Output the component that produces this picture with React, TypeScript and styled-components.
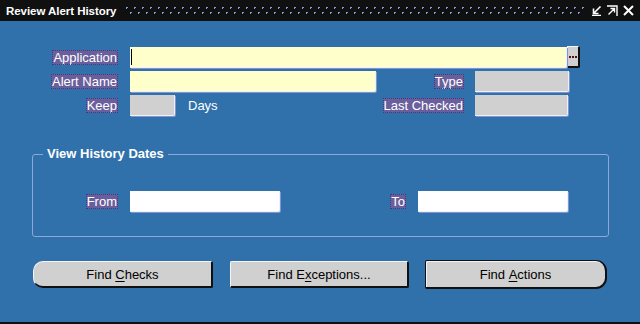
import React from "react";
import styled, { createGlobalStyle } from "styled-components";

const Global = createGlobalStyle`
  html, body { margin: 0; padding: 0; background: #3071ab; }
  body { font-family: "Liberation Sans", Arial, sans-serif; }
`;

const Window = styled.div`
  width: 640px;
  height: 324px;
  display: flex;
  flex-direction: column;
  background: #3071ab;
  box-sizing: border-box;
  overflow: hidden;
`;

const TitleBar = styled.div`
  height: 21px;
  flex: none;
  background: #101010;
  display: flex;
  align-items: center;
  padding: 0 6px 0 6px;
  box-sizing: border-box;
`;

const TitleText = styled.div`
  color: #fff;
  font-weight: bold;
  font-size: 11.5px;
  letter-spacing: -0.05px;
  white-space: nowrap;
`;

const TitleFill = styled.div`
  flex: 1;
  height: 10px;
  margin: 0 5px 0 10px;
  display: flex;
`;

const TitleIcons = styled.div`
  display: flex;
  align-items: center;
  gap: 5px;
`;

const Body = styled.div`
  flex: 1;
  border-bottom: 2px solid #101010;
  padding-top: 26px;
  display: flex;
  flex-direction: column;
`;

const Row = styled.div<{ $mt?: number }>`
  display: flex;
  align-items: center;
  height: 21px;
  margin-top: ${(p) => p.$mt ?? 0}px;
`;

const LabelCell = styled.div<{ $w: number }>`
  width: ${(p) => p.$w}px;
  flex: none;
  display: flex;
  justify-content: flex-end;
`;

const Prompt = styled.span`
  color: #fff;
  font-size: 13px;
  line-height: 15px;
  height: 15px;
  padding: 0 1px;
  background: #6a5f9c;
  outline: 1px dotted #33407e;
  outline-offset: -1px;
  white-space: nowrap;
`;

const PlainText = styled.span<{ $ml?: number }>`
  color: #fff;
  font-size: 13px;
  margin-left: ${(p) => p.$ml ?? 0}px;
`;

const Field = styled.div<{ $w: number; $ml?: number; $bg: string }>`
  position: relative;
  flex: none;
  width: ${(p) => p.$w}px;
  height: 21px;
  margin-left: ${(p) => p.$ml ?? 0}px;
  background: ${(p) => p.$bg};
  box-sizing: border-box;
  border-right: 1px solid #eef0fa;
  border-bottom: 1px solid #eef0fa;
  border-radius: 0 0 2px 0;
  box-shadow: 1px 1px 0 #8095d2;
`;

const Cursor = styled.div`
  position: absolute;
  left: 1px;
  top: 2px;
  width: 1px;
  height: 16px;
  background: #000;
`;

const Group = styled.div<{ $w: number }>`
  flex: none;
  width: ${(p) => p.$w}px;
  display: flex;
  align-items: center;
`;

const LovButton = styled.div`
  flex: none;
  width: 13px;
  height: 22px;
  margin-top: -1px;
  background: #d0d0d0;
  box-sizing: border-box;
  border-top: 1px solid #f4f4f4;
  border-left: 1px solid #f4f4f4;
  border-right: 2px solid #101010;
  border-bottom: 2px solid #101010;
  border-radius: 0 2px 2px 0;
  display: flex;
  align-items: center;
  justify-content: center;
  gap: 1px;
`;

const LovDot = styled.span`
  width: 2px;
  height: 2px;
  background: #5a0d0d;
`;

const Frame = styled.div`
  position: relative;
  margin: 38px 0 0 32px;
  width: 577px;
  box-sizing: border-box;
  border: 1px solid #8ea6dc;
  border-radius: 3px;
  padding: 36px 0 24px 0;
`;

const FrameTitle = styled.div`
  position: absolute;
  top: -9px;
  left: 10px;
  padding: 0 4px;
  background: #3071ab;
  color: #fff;
  font-weight: bold;
  font-size: 13px;
  line-height: 16px;
`;

const ButtonRow = styled.div`
  display: flex;
  margin: 24px 0 0 33px;
`;

const Btn = styled.div<{ $w: number; $ml?: number; $shape: "left" | "none" | "default" }>`
  flex: none;
  width: ${(p) => p.$w}px;
  height: ${(p) => (p.$shape === "default" ? 29 : 27)}px;
  margin-left: ${(p) => p.$ml ?? 0}px;
  margin-top: ${(p) => (p.$shape === "default" ? -1 : 0)}px;
  box-sizing: border-box;
  background: #d0d0d0;
  display: flex;
  align-items: center;
  justify-content: center;
  font-size: 13px;
  color: #000;
  ${(p) =>
    p.$shape === "default"
      ? `
    border: 1px solid #101010;
    border-right-width: 2px;
    border-bottom-width: 2px;
    border-radius: 2px 11px 11px 2px;
    box-shadow: inset 1px 1px 0 #f4f4f4;
  `
      : `
    border-top: 1px solid #f4f4f4;
    border-left: 1px solid #f4f4f4;
    border-right: 2px solid #101010;
    border-bottom: 2px solid #101010;
    border-radius: ${p.$shape === "left" ? "10px 2px 2px 10px" : "2px"};
  `}
`;

const Mn = styled.span`
  text-decoration: underline;
  text-underline-offset: 2px;
`;

const DotPattern = () => (
  <svg width="100%" height="10" style={{ display: "block" }}>
    <defs>
      <pattern id="dots" width="8" height="10" patternUnits="userSpaceOnUse">
        <rect x="0" y="1" width="2" height="1" fill="#7f9ce6" />
        <rect x="0" y="2" width="1" height="1" fill="#7f9ce6" />
        <rect x="4" y="6" width="2" height="1" fill="#7f9ce6" />
        <rect x="4" y="7" width="1" height="1" fill="#7f9ce6" />
      </pattern>
    </defs>
    <rect width="100%" height="10" fill="url(#dots)" />
  </svg>
);

const MinIcon = () => (
  <svg width="11" height="11" viewBox="0 0 11 11">
    <path d="M9.5 1.5 L3 8 M2.5 3.5 V8.5 H7.5 M1 10.5 H10" stroke="#fff" strokeWidth="1.6" fill="none" />
  </svg>
);

const MaxIcon = () => (
  <svg width="11" height="11" viewBox="0 0 11 11">
    <path d="M0 1 H10 V11 M1.5 9.5 L7.5 3.5 M3.5 3.5 H7.5 V7.5" stroke="#fff" strokeWidth="1.4" fill="none" />
  </svg>
);

const CloseIcon = () => (
  <svg width="11" height="11" viewBox="0 0 11 11">
    <path d="M1 1 L10 10 M10 1 L1 10" stroke="#fff" strokeWidth="2" fill="none" />
  </svg>
);

export default function App() {
  return (
    <>
      <Global />
      <Window>
        <TitleBar>
          <TitleText>Review Alert History</TitleText>
          <TitleFill>
            <DotPattern />
          </TitleFill>
          <TitleIcons>
            <MinIcon />
            <MaxIcon />
            <CloseIcon />
          </TitleIcons>
        </TitleBar>
        <Body>
          <Row>
            <LabelCell $w={118}>
              <Prompt>Application</Prompt>
            </LabelCell>
            <Field $w={437} $ml={12} $bg="#ffffcc">
              <Cursor />
            </Field>
            <LovButton>
              <LovDot />
              <LovDot />
              <LovDot />
            </LovButton>
          </Row>
          <Row $mt={3}>
            <LabelCell $w={118}>
              <Prompt>Alert Name</Prompt>
            </LabelCell>
            <Field $w={246} $ml={12} $bg="#ffffcc" />
            <LabelCell $w={88}>
              <Prompt>Type</Prompt>
            </LabelCell>
            <Field $w={94} $ml={11} $bg="#d0d0d0" />
          </Row>
          <Row $mt={3}>
            <LabelCell $w={118}>
              <Prompt>Keep</Prompt>
            </LabelCell>
            <Group $w={246}>
              <Field $w={45} $ml={12} $bg="#d0d0d0" />
              <PlainText $ml={13}>Days</PlainText>
            </Group>
            <LabelCell $w={100}>
              <Prompt>Last Checked</Prompt>
            </LabelCell>
            <Field $w={93} $ml={11} $bg="#d0d0d0" />
          </Row>
          <Frame>
            <FrameTitle>View History Dates</FrameTitle>
            <Row>
              <LabelCell $w={85}>
                <Prompt>From</Prompt>
              </LabelCell>
              <Field $w={150} $ml={12} $bg="#ffffff" />
              <LabelCell $w={126}>
                <Prompt>To</Prompt>
              </LabelCell>
              <Field $w={150} $ml={12} $bg="#ffffff" />
            </Row>
          </Frame>
          <ButtonRow>
            <Btn $w={180} $shape="left">
              Find&nbsp;<Mn>C</Mn>hecks
            </Btn>
            <Btn $w={179} $ml={17} $shape="none">
              Find E<Mn>x</Mn>ceptions...
            </Btn>
            <Btn $w={182} $ml={16} $shape="default">
              Find&nbsp;<Mn>A</Mn>ctions
            </Btn>
          </ButtonRow>
        </Body>
      </Window>
    </>
  );
}
